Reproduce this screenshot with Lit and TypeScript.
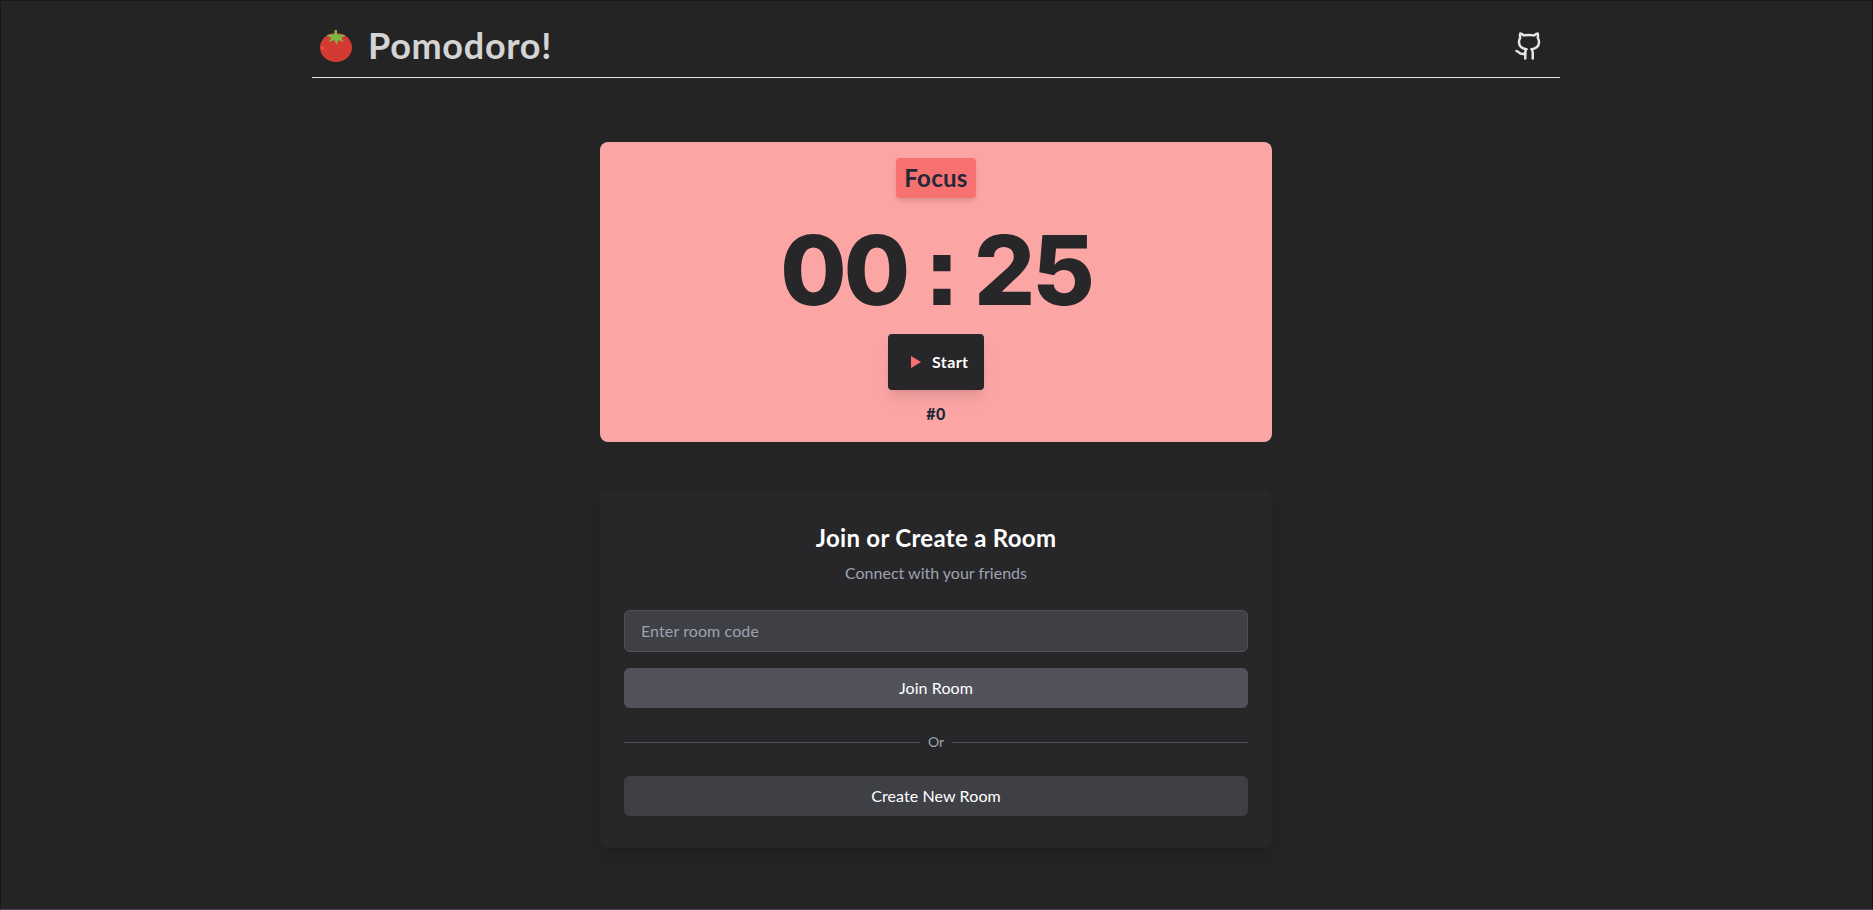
import { LitElement, html, css } from "lit";
import { customElement } from "lit/decorators.js";

@customElement("app-root")
export class AppRoot extends LitElement {
  static styles = css`
    :host { display: block; box-sizing: border-box; height: 910px; background: #242424; border: 1px solid #18181b; border-bottom-color: #4a4453; padding-right: 1px; font-family: Lato, sans-serif; color: #fff; overflow: hidden; }
    * { box-sizing: border-box; }
    .wrap { width: 1248px; margin: 0 auto; }
    header { display: flex; align-items: center; justify-content: space-between; height: 77px; border-bottom: 1px solid #e5e5e5; padding: 13px 0 0 8px; }
    .brand { display: flex; align-items: center; gap: 16px; }
    .tomato { width: 32px; height: 32px; display: block; }
    h1 { margin: 0 0 2px; font-size: 36px; font-weight: 700; letter-spacing: .7px; color: #d4d4d4; line-height: 40px; }
    .gh { width: 30px; height: 30px; display: block; margin: 0 16px 0 0; color: #e5e5e5; }
    main { display: flex; flex-direction: column; align-items: center; padding-top: 64px; gap: 48px; }
    .timer { width: 672px; height: 300px; border-radius: 8px; background: #fca5a5; display: flex; flex-direction: column; align-items: center; padding-top: 16px; color: #27272a; }
    .mode { height: 40px; padding: 0 8px; background: #f87171; border-radius: 4px; font-size: 24px; font-weight: 700; letter-spacing: .3px; line-height: 40px; color: #1f2937; box-shadow: 0 4px 6px -1px rgb(0 0 0 / 0.1), 0 2px 4px -2px rgb(0 0 0 / 0.1); }
    .time { font-family: Inter, sans-serif; font-weight: 760; font-feature-settings: "ss07"; font-size: 96px; letter-spacing: -3px; line-height: 96px; margin-top: 24px; }
    .start { margin-top: 16px; width: 96px; height: 56px; padding: 0 0 0 23px; background: #27272a; border: none; border-radius: 4px; display: flex; align-items: center; gap: 11px; color: #fff; font: 700 16px Lato, sans-serif; letter-spacing: .4px; box-shadow: 0 10px 15px -3px rgb(0 0 0 / 0.1), 0 4px 6px -4px rgb(0 0 0 / 0.1); }
    .start span { margin-top: -2px; }
    .tri { width: 10px; height: 12px; display: block; }
    .count { margin-top: 14px; font-size: 16px; font-weight: 900; letter-spacing: .5px; line-height: 20px; color: #1f2937; }
    .room { width: 672px; height: 358px; border-radius: 8px; background: #27272a; padding: 24px; display: flex; flex-direction: column; box-shadow: 0 10px 15px -3px rgb(0 0 0 / 0.1), 0 4px 6px -4px rgb(0 0 0 / 0.1); }
    h2 { margin: 10px 0 0; font-size: 24px; font-weight: 700; letter-spacing: .3px; line-height: 28px; text-align: center; color: #fff; }
    .sub { margin: 9px 0 0; font-size: 16px; line-height: 24px; text-align: center; color: #9ca3af; }
    .input { margin-top: 25px; height: 42px; padding: 0 16px 2px; display: flex; align-items: center; border-radius: 6px; background: #3f3f46; border: 1px solid #52525b; font-size: 16px; letter-spacing: .1px; color: #9ca3af; }
    .btn { height: 40px; border-radius: 6px; display: flex; align-items: center; justify-content: center; font-size: 16px; letter-spacing: .1px; color: #fff; padding-bottom: 1px; }
    .join { margin-top: 16px; background: #52525b; }
    .create { background: #3f3f46; }
    .or { margin: 24px 0; display: flex; align-items: center; gap: 8px; font-size: 14px; line-height: 20px; color: #9ca3af; }
    .or i { flex: 1; height: 1px; background: #52525b; }
  `;

  render() {
    return html`
      <div class="wrap">
        <header>
          <div class="brand">
            <svg class="tomato" viewBox="0 0 32 32" aria-hidden="true">
              <ellipse cx="16" cy="17.500" rx="16" ry="14.500" fill="#d33a32"/>
              <ellipse cx="2.500" cy="18" rx=".8" ry="1.800" fill="#e8665e"/>
              <path d="M14.500 0h2.500v4.500c3 0 5.500 0 9 .5l-5 3 3 4-6-2-1.500 5-2-5-6 2 3-4-5.500-3c3-.5 5.500-.5 8.500-.5z" fill="#77bb44"/>
            </svg>
            <h1>Pomodoro!</h1>
          </div>
          <svg class="gh" viewBox="0 0 24 24" fill="none" stroke="currentColor" stroke-width="2" stroke-linecap="round" stroke-linejoin="round" aria-hidden="true">
            <path d="M15 22v-4a4.800 4.800 0 0 0-1-3.500c3 0 6-2 6-5.500.08-1.250-.27-2.480-1-3.500.28-1.150.28-2.350 0-3.500 0 0-1 0-3 1.500-2.640-.5-5.360-.5-8 0C6 2 5 2 5 2c-.3 1.150-.3 2.350 0 3.500A5.400 5.400 0 0 0 4 9c0 3.500 3 5.500 6 5.500-.39.490-.68 1.050-.85 1.650-.17.600-.22 1.230-.15 1.850v4"/>
            <path d="M9 18c-4.510 2-5-2-7-2"/>
          </svg>
        </header>
        <main>
          <section class="timer">
            <div class="mode">Focus</div>
            <div class="time">00 : 25</div>
            <button class="start">
              <svg class="tri" viewBox="0 0 10 12" aria-hidden="true"><path d="M0 0l10 6-10 6z" fill="#f87171"/></svg>
              <span>Start</span>
            </button>
            <div class="count">#0</div>
          </section>
          <section class="room">
            <h2>Join or Create a Room</h2>
            <p class="sub">Connect with your friends</p>
            <div class="input">Enter room code</div>
            <div class="btn join">Join Room</div>
            <div class="or"><i></i><span>Or</span><i></i></div>
            <div class="btn create">Create New Room</div>
          </section>
        </main>
      </div>
    `;
  }
}
